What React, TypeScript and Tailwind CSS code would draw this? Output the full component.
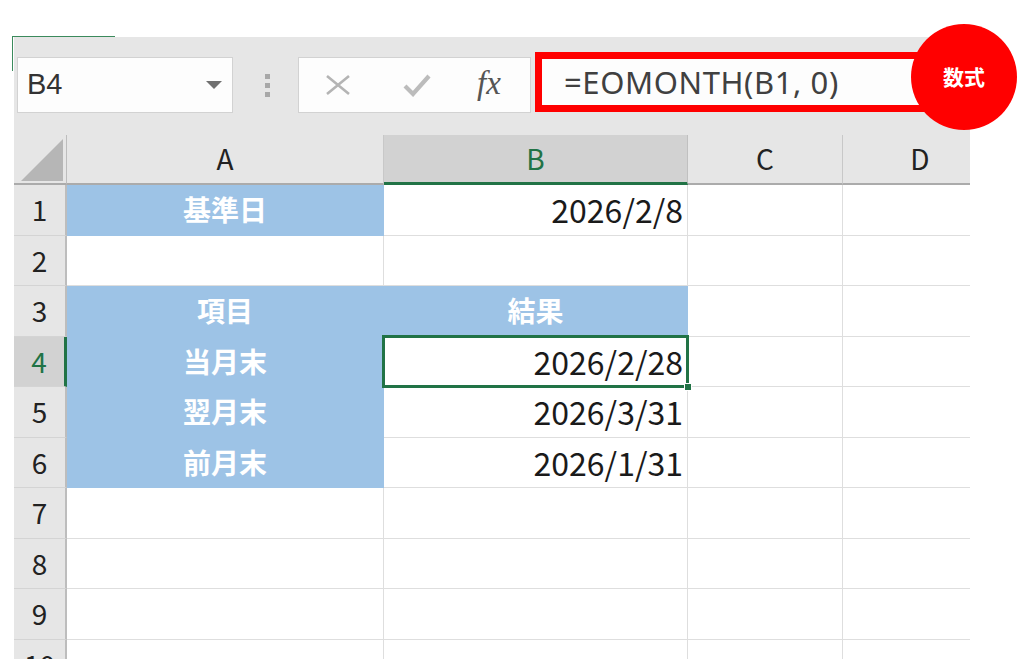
const rows = [
  { n: 1, a: "基準日", aBlue: true, b: "2026/2/8", bBlue: false },
  { n: 2, a: "", aBlue: false, b: "", bBlue: false },
  { n: 3, a: "項目", aBlue: true, b: "結果", bBlue: true },
  { n: 4, a: "当月末", aBlue: true, b: "2026/2/28", bBlue: false },
  { n: 5, a: "翌月末", aBlue: true, b: "2026/3/31", bBlue: false },
  { n: 6, a: "前月末", aBlue: true, b: "2026/1/31", bBlue: false },
  { n: 7, a: "", aBlue: false, b: "", bBlue: false },
  { n: 8, a: "", aBlue: false, b: "", bBlue: false },
  { n: 9, a: "", aBlue: false, b: "", bBlue: false },
  { n: 10, a: "", aBlue: false, b: "", bBlue: false },
];

const font = { fontFamily: '"Noto Sans CJK JP", "Liberation Sans", sans-serif' };

function Cell({
  text,
  blue,
  align,
  selected,
  tall,
}: {
  text: string;
  blue: boolean;
  align: "center" | "right";
  selected?: boolean;
  tall: boolean;
}) {
  return (
    <div
      className={
        "relative flex items-center border-r border-b leading-none " +
        (tall ? "h-[51px] " : "h-[50px] ") +
        (selected ? "z-10 " : "") +
        (blue
          ? "bg-[#9dc3e6] border-[#9dc3e6] text-white font-bold text-[28px] justify-center pb-[2px]"
          : "bg-white border-[#dedede] text-[#1a1a1a] text-[32px] pb-[2px] " +
            (align === "right" ? "justify-end pr-[4px]" : "justify-center"))
      }
    >
      {text}
      {selected && (
        <>
          <div className="absolute -top-[2px] -left-[2px] -right-[2px] -bottom-[2px] border-[3px] border-[#217346]" />
          <div className="absolute -right-[5px] -bottom-[5px] w-[8px] h-[8px] bg-[#217346] border border-white" />
        </>
      )}
    </div>
  );
}

export default function App() {
  return (
    <div className="relative w-[1024px] h-[659px] bg-white overflow-hidden" style={font}>
      {/* green outline remnant top-left */}
      <div className="absolute left-[12px] top-[36px] w-[103px] h-[1px] bg-[#3b8a5c]" />
      <div className="absolute left-[12px] top-[36px] w-[1px] h-[35px] bg-[#3b8a5c]" />

      <div className="ml-[14px] mt-[37px] w-[956px] bg-[#e6e6e6] overflow-hidden">
        {/* formula bar */}
        <div className="flex items-start h-[98px]">
          <div className="ml-[3px] mt-[20px] w-[216px] h-[56px] shrink-0 bg-[#fdfdfd] border border-[#d2d2d2] flex items-center justify-between pl-[9px] pr-[10px]">
            <span className="text-[29px] text-[#333]" style={{ fontFamily: '"Liberation Sans", sans-serif' }}>
              B4
            </span>
            <svg width="16" height="9" viewBox="0 0 16 9">
              <path d="M0 0 H16 L8 8 Z" fill="#707070" />
            </svg>
          </div>
          <div className="ml-[32px] mt-[37px] flex flex-col gap-[4px]">
            <div className="w-[5px] h-[5px] bg-[#a8a8a8]" />
            <div className="w-[5px] h-[5px] bg-[#a8a8a8]" />
            <div className="w-[5px] h-[5px] bg-[#a8a8a8]" />
          </div>
          <div className="ml-[28px] mt-[20px] w-[233px] h-[56px] shrink-0 bg-[#fdfdfd] border border-[#d2d2d2] flex items-center pl-[26px]">
            <svg width="26" height="22" viewBox="0 0 26 22">
              <path d="M2 2 L24 20 M24 2 L2 20" stroke="#b4b4b4" strokeWidth="2.6" fill="none" />
            </svg>
            <svg className="ml-[52px]" width="28" height="24" viewBox="0 0 28 24">
              <path d="M2 13 L10 21 L26 3" stroke="#bcbcbc" strokeWidth="4.2" fill="none" />
            </svg>
            <span
              className="ml-[46px] text-[33px] italic text-[#555] pb-[3px]"
              style={{ fontFamily: '"Liberation Serif", serif' }}
            >
              fx
            </span>
          </div>
          <div className="ml-[4px] mt-[15px] w-[400px] h-[60px] shrink-0 border-[7px] border-[#ff0000] bg-[#fdfdfd] flex items-center pl-[22px]">
            <span className="text-[31px] text-[#404040] tracking-[0.6px]" style={{ fontFamily: '"Noto Sans", "Liberation Sans", sans-serif' }}>
              =EOMONTH(B1, 0)
            </span>
          </div>
        </div>

        {/* grid: column D runs past the visible edge */}
        <div className="grid grid-cols-[53px_317px_304px_155px_155px] w-[984px]">
          {/* header row */}
          <div className="h-[50px] flex items-end justify-end border-r border-[#bdbdbd] border-b-2 border-b-[#ababab] pb-[2px] pr-[3px]">
            <svg width="42" height="42" viewBox="0 0 42 42">
              <path d="M42 0 L42 42 L0 42 Z" fill="#b6b6b6" />
            </svg>
          </div>
          <div className="h-[50px] flex items-center justify-center text-[28px] text-[#222] border-r border-[#c8c8c8] border-b-2 border-b-[#ababab] pb-[3px]">
            A
          </div>
          <div className="h-[50px] flex items-center justify-center text-[28px] text-[#217346] bg-[#d2d2d2] border-r border-[#c0c0c0] border-b-[3px] border-b-[#217346] pb-[2px]">
            B
          </div>
          <div className="h-[50px] flex items-center justify-center text-[28px] text-[#222] border-r border-[#c8c8c8] border-b-2 border-b-[#ababab] pb-[3px]">
            C
          </div>
          <div className="h-[50px] flex items-center justify-center text-[28px] text-[#222] border-r border-[#c8c8c8] border-b-2 border-b-[#ababab] pb-[3px]">
            D
          </div>

          {rows.map((r) => {
            const tall = r.n % 2 === 1;
            return (
              <div key={r.n} className="contents">
                <div
                  className={
                    "flex items-center justify-center text-[28px] leading-none border-b border-[#d4d4d4] pb-[2px] " +
                    (tall ? "h-[51px] " : "h-[50px] ") +
                    (r.n === 4
                      ? "bg-[#d2d2d2] text-[#217346] border-r-[3px] border-r-[#217346]"
                      : "bg-[#e6e6e6] text-[#222] border-r-2 border-r-[#bdbdbd]")
                  }
                >
                  {r.n}
                </div>
                <Cell text={r.a} blue={r.aBlue} align="center" tall={tall} />
                <Cell text={r.b} blue={r.bBlue} align={r.bBlue ? "center" : "right"} selected={r.n === 4} tall={tall} />
                <Cell text="" blue={false} align="center" tall={tall} />
                <Cell text="" blue={false} align="center" tall={tall} />
              </div>
            );
          })}
        </div>
      </div>

      {/* annotation badge */}
      <div className="absolute left-[911px] top-[24px] w-[106px] h-[106px] rounded-full bg-[#ff0000] flex items-center justify-center">
        <span className="text-white font-bold text-[21px]">数式</span>
      </div>
    </div>
  );
}
